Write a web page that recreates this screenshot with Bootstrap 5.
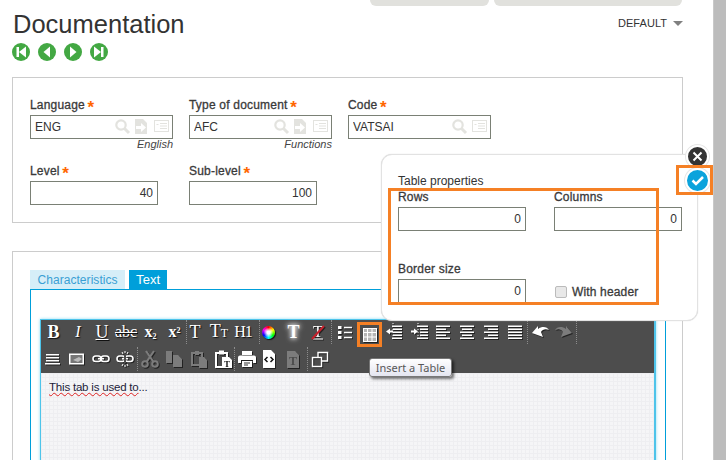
<!DOCTYPE html>
<html lang="en">
<head>
  <meta charset="UTF-8">
  <title>Documentation</title>
  <link href="https://cdn.jsdelivr.net/npm/bootstrap@5.3.3/dist/css/bootstrap.min.css" rel="stylesheet">
  <style>
    html, body { height: 460px; overflow: hidden; background: #fff; }
    body { font: 12px/14px "Liberation Sans", Arial, sans-serif; color: #333; }
    .page-wrap { height: 460px; position: relative; overflow: hidden; }
    .page-main { width: 713px; padding-left: 12px; }
    .page-bar { width: 13px; background: #bcbcbc; border-left: 1px solid #c9c9c9; }

    .top-tabs { height: 6px; padding-left: 358px; gap: 5px; }
    .top-tab { background: #e1e1dd; border-radius: 0 0 7px 7px; height: 6px; }
    .top-tab-a { width: 119px; }
    .top-tab-b { width: 188px; }

    .title-row { width: 671px; height: 31px; }
    .page-title { font: 25.5px/30px "Liberation Sans", Arial, sans-serif; color: #333; margin: 3px 0 0 1px; }
    .view-pick { margin-top: 10px; font-size: 11px; letter-spacing: .05px; }
    .view-caret { width: 0; height: 0; border: 5px solid transparent; border-top: 5px solid #808080; border-bottom: 0; margin: 0 0 0 6px; }
    .rec-nav { gap: 8px; height: 18px; margin-top: 6px; }

    .form-box { width: 671px; height: 146px; border: 1px solid #ccc; margin-top: 16px; padding: 20px 0 0 17px; }
    .fld-row { gap: 16px; height: 54px; }
    .fld-row + .fld-row { margin-top: 12px; }
    .fld-wide { width: 143px; }
    .fld-num { width: 128px; }
    .fld-num + .fld-num { margin-left: 15px; }
    .fld-label { display: block; height: 14px; margin-bottom: 3px; letter-spacing: .2px; -webkit-text-stroke: .3px #3a3a3a; color: #3a3a3a; white-space: nowrap; }
    .req { color: #f60; font-size: 17px; font-weight: bold; line-height: 0; vertical-align: -4px; margin-left: -1px; -webkit-text-stroke: 0; }
    .fld-box { border: 1px solid #7a8075; height: 24px; background: #fff; }
    .fld-box svg { flex: none; }
    input.fld-inp, input.fld-inp:focus { border: 0; border-radius: 0; box-shadow: none; padding: 0 4px; height: 22px; min-height: 0; font-size: 12px; color: #333; background: transparent; min-width: 0; flex: 1 1 0; }
    .fld-hint { font-style: italic; font-size: 11px; line-height: 11px; text-align: right; color: #444; white-space: nowrap; }

    .text-box { width: 671px; height: 300px; border: 1px solid #ccc; margin-top: 28px; padding: 18px 0 0 17px; }
    .doc-tabs { gap: 4px; height: 19px; }
    .doc-tab { display: block; padding: 0 7.500px; line-height: 20px; height: 19px; font-size: 12px; letter-spacing: .05px; background: #d6eef8; color: #3a9fd4; }
    .doc-tab.on { background: #009fda; color: #fff; padding: 0 7px; font-size: 13px; }
    .doc-pane { width: 636px; height: 300px; border: 1px solid #009fda; padding: 29px 9px 0; }
    .editor-box { border: 1px solid #4ec4ea; border-right-width: 2px; box-shadow: 0 0 3px #8fdcf4; }
    .editor-bar { background: #4d4d4d; height: 53px; }
    .bar-row { height: 24px; }
    .bar-row + .bar-row { height: 29px; padding-top: 1px; }
    .bar-btn { height: 25px; flex: none; color: #fff; position: relative; }
    .bar-btn svg { display: block; filter: drop-shadow(1px 1px 0 #222); overflow: visible; }
    .bar-sep { width: 1px; height: 24px; flex: none; border-left: 1px dotted #8c8c8c; }
    .serif-ico { font: bold 16px/16px "Liberation Serif", serif; text-shadow: 1px 1px 1px #111; white-space: nowrap; }
    .serif-ico.thin { font-weight: normal; }
    .serif-ico.big { font-size: 18px; }
    .serif-ico.tight { letter-spacing: -1px; }
    .serif-ico .low-t { font-size: 12px; }
    .serif-ico sub, .serif-ico sup { font-size: 8px; line-height: 0; }
    .glow-ico { text-shadow: 0 0 4px #fff, 0 0 6px #fff; }
    .wheel-ico { width: 13px; height: 13px; border-radius: 50%; background: radial-gradient(circle at 50% 50%, #fff 0 1.500px, transparent 5px), conic-gradient(#f00, #ff0, #0f0, #0ff, #00f, #f0f, #f00); box-shadow: 1px 1px 1px #111; }
    .mark-box { outline: 3px solid #f58025; outline-offset: -3px; margin-top: 5px; }
    .editor-text { height: 90px; padding: 7px 8px; background-color: #f5f5f7; background-image: linear-gradient(#eeeef1 1px, transparent 1px), linear-gradient(90deg, #eeeef1 1px, transparent 1px); background-size: 4px 4px; color: #1c1c3a; font-size: 11.500px; letter-spacing: -.2px; }
    .spell-err { text-decoration: underline wavy #d22; text-decoration-thickness: 1px; }

    .tip-box { position: absolute; left: 369px; top: 358px; width: 83px; height: 19px; border: 1px solid #777; border-radius: 3px; background: linear-gradient(#fff, #e4e5f0); box-shadow: 2px 2px 3px rgba(0,0,0,.55); font: 11px/17px "Noto Sans", sans-serif; color: #575757; text-align: center; white-space: nowrap; }

    .prop-pop { position: absolute; left: 381px; top: 154px; width: 317px; height: 167px; background: #fff; border: 1px solid #e2e2e2; border-radius: 11px; padding: 19px 0 0 16px; box-shadow: 0 0 1px #ccc; }
    .prop-title { height: 16px; color: #333; }
    .prop-grid { display: grid; grid-template-columns: 128px 128px; column-gap: 28px; row-gap: 31px; }
    .prop-check { height: 24px; padding-left: 1px; margin-top: 18px; letter-spacing: .15px; -webkit-text-stroke: .3px #3a3a3a; color: #3a3a3a; }
    .prop-check input.form-check-input { width: 12px; height: 12px; margin: 0 5px 0 0; background-color: #e8e8e8; border: 1px solid #bbb; border-radius: 2px; float: none; }
    .round-btn { position: absolute; border-radius: 50%; border: 2px solid #fff; box-shadow: 0 0 0 1px #e6e6e6; }
    .round-x { left: 686px; top: 145px; width: 23px; height: 23px; background: #333; }
    .round-ok { left: 685px; top: 168px; width: 25px; height: 25px; background: #0ba3dc; }
    .note-box { position: absolute; border: 3px solid #f58025; pointer-events: none; }
    .note-fields { left: 388px; top: 188px; width: 271px; height: 117px; }
    .note-ok { left: 676px; top: 165px; width: 37px; height: 30px; }
  </style>
</head>
<body>
  <div class="page-wrap d-flex">
    <div class="page-main">
      <div class="top-tabs d-flex">
        <div class="top-tab top-tab-a"></div>
        <div class="top-tab top-tab-b"></div>
      </div>

      <div class="title-row d-flex justify-content-between">
        <h1 class="page-title">Documentation</h1>
        <div class="view-pick d-flex align-items-center align-self-start">DEFAULT <span class="view-caret"></span></div>
      </div>

      <div class="rec-nav d-flex">
        <svg width="18" height="18"><circle cx="9" cy="9" r="9" fill="#43a843"/><rect x="4.500" y="4" width="2.500" height="10" fill="#fff"/><path d="M14 3.500v11L7 9z" fill="#fff"/></svg>
        <svg width="18" height="18"><circle cx="9" cy="9" r="9" fill="#43a843"/><path d="M12 3.500v11L5.500 9z" fill="#fff"/></svg>
        <svg width="18" height="18"><circle cx="9" cy="9" r="9" fill="#43a843"/><path d="M6 3.500v11L12.500 9z" fill="#fff"/></svg>
        <svg width="18" height="18"><circle cx="9" cy="9" r="9" fill="#43a843"/><rect x="11" y="4" width="2.500" height="10" fill="#fff"/><path d="M4 3.500v11L11 9z" fill="#fff"/></svg>
      </div>

      <div class="form-box">
        <div class="fld-row d-flex">
          <div class="fld-wide">
            <label class="fld-label">Language <span class="req">*</span></label>
            <div class="fld-box d-flex align-items-center">
              <input class="form-control fld-inp" value="ENG">
              <svg class="ico-find" width="20" height="16"></svg><svg class="ico-jump" width="19" height="16"></svg><svg class="ico-list" width="18" height="16"></svg>
            </div>
            <div class="fld-hint">English</div>
          </div>
          <div class="fld-wide">
            <label class="fld-label">Type of document <span class="req">*</span></label>
            <div class="fld-box d-flex align-items-center">
              <input class="form-control fld-inp" value="AFC">
              <svg class="ico-find" width="20" height="16"></svg><svg class="ico-jump" width="19" height="16"></svg><svg class="ico-list" width="18" height="16"></svg>
            </div>
            <div class="fld-hint">Functions</div>
          </div>
          <div class="fld-wide">
            <label class="fld-label">Code <span class="req">*</span></label>
            <div class="fld-box d-flex align-items-center">
              <input class="form-control fld-inp" value="VATSAI">
              <svg class="ico-find" width="20" height="16"></svg><svg class="ico-list" width="18" height="16"></svg>
            </div>
          </div>
        </div>
        <div class="fld-row d-flex">
          <div class="fld-num">
            <label class="fld-label">Level <span class="req">*</span></label>
            <div class="fld-box d-flex align-items-center"><input class="form-control fld-inp text-end" value="40"></div>
          </div>
          <div class="fld-num">
            <label class="fld-label">Sub-level <span class="req">*</span></label>
            <div class="fld-box d-flex align-items-center"><input class="form-control fld-inp text-end" value="100"></div>
          </div>
        </div>
      </div>

      <div class="text-box">
        <ul class="doc-tabs nav">
          <li><a class="doc-tab text-decoration-none" href="#">Characteristics</a></li>
          <li><a class="doc-tab on text-decoration-none" href="#">Text</a></li>
        </ul>
        <div class="doc-pane">
          <div class="editor-box">
            <div class="editor-bar">
              <div class="bar-row d-flex align-items-center" id="barOne"></div>
              <div class="bar-row d-flex align-items-center" id="barTwo"></div>
            </div>
            <div class="editor-text"><span class="spell-err">This tab is used to</span>...</div>
          </div>
        </div>
      </div>
    </div>
    <div class="page-bar"></div>

    <div class="tip-box">Insert a Table</div>

    <div class="prop-pop">
      <div class="prop-title">Table properties</div>
      <div class="prop-grid">
        <div>
          <label class="fld-label">Rows</label>
          <div class="fld-box d-flex align-items-center"><input class="form-control fld-inp text-end" value="0"></div>
        </div>
        <div>
          <label class="fld-label">Columns</label>
          <div class="fld-box d-flex align-items-center"><input class="form-control fld-inp text-end" value="0"></div>
        </div>
        <div>
          <label class="fld-label">Border size</label>
          <div class="fld-box d-flex align-items-center"><input class="form-control fld-inp text-end" value="0"></div>
        </div>
        <div class="prop-check d-flex align-items-center">
          <input class="form-check-input" type="checkbox"> With header
        </div>
      </div>
    </div>

    <div class="round-btn round-x d-flex align-items-center justify-content-center">
      <svg width="11" height="11"><path d="M1.500 1.500l8 8M9.500 1.500l-8 8" stroke="#fff" stroke-width="2"/></svg>
    </div>
    <div class="round-btn round-ok d-flex align-items-center justify-content-center">
      <svg width="13" height="11"><path d="M1.500 5.500l3.500 3.500 7-7" fill="none" stroke="#fff" stroke-width="2.500"/></svg>
    </div>
    <div class="note-box note-fields"></div>
    <div class="note-box note-ok"></div>
  </div>

  <script src="https://cdn.jsdelivr.net/npm/bootstrap@5.3.3/dist/js/bootstrap.bundle.min.js"></script>
  <script>
    // small field icons
    document.querySelectorAll('.ico-find').forEach(el => {
      el.innerHTML = '<circle cx="6" cy="6" r="4.700" fill="none" stroke="#e3e3df" stroke-width="2.200"/><path d="M9.500 9.500l4.500 4.500" stroke="#e3e3df" stroke-width="3"/>';
    });
    document.querySelectorAll('.ico-jump').forEach(el => {
      el.innerHTML = '<path d="M0 0h8l4 4v11H0z" fill="#e3e3df"/><path d="M1 7h5V4l5 4.500-5 4.500v-3H1z" fill="#fff"/>';
    });
    document.querySelectorAll('.ico-list').forEach(el => {
      el.innerHTML = '<rect x=".5" y="1.500" width="14" height="11" fill="none" stroke="#e3e3df"/><path d="M6 4.500h7M6 7h7M6 9.500h7M2.500 5.500h2" stroke="#e3e3df"/>';
    });

    function svg(body) { return `<svg width="20" height="20">${body}</svg>`; }

    // rows of text lines: [x, width] from top to bottom
    function lines(rows, y0 = 3.500, fill = '#fff') {
      return rows.map((r, i) => `<rect x="${r[0]}" y="${y0 + i * 3}" width="${r[1]}" height="1.500" fill="${fill}"/>`).join('');
    }
    function serif(text, cls = '') { return `<span class="serif-ico ${cls}">${text}</span>`; }

    const grey = '#7c7c7c';
    const chain = (c) => `<rect x="2" y="7" width="8" height="5.500" rx="2.700" fill="none" stroke="${c}" stroke-width="1.600"/><rect x="10" y="7" width="8" height="5.500" rx="2.700" fill="none" stroke="${c}" stroke-width="1.600"/><path d="M7 9.700h6" stroke="${c}" stroke-width="1.600"/>`;

    const rowOne = [
      { w: 25, html: serif('B', 'big') },
      { w: 24, html: serif('I', 'thin fst-italic') },
      { w: 24, html: serif('<u>U</u>', 'thin big') },
      { w: 24, html: serif('<s>abc</s>', 'thin') },
      { w: 25, html: serif('x<sub>2</sub>') },
      { w: 23, html: serif('x<sup>2</sup>') },
      { sep: 1 },
      { w: 16, html: serif('T', 'thin big') },
      { w: 32, html: serif('T<span class="low-t">T</span>', 'thin big') },
      { w: 16, html: serif('H1', 'thin tight') },
      { w: 8, html: '' },
      { sep: 1 },
      { w: 16, html: '<div class="wheel-ico"></div>' },
      { w: 35, html: serif('T', 'glow-ico big') },
      { w: 14, html: `<svg width="20" height="20"><text x="10" y="15" text-anchor="middle" fill="#fff" font-family="Liberation Serif" font-size="16">T</text><path d="M5 17h10" stroke="#fff"/><path d="M4 17L16 4" stroke="#c8202c" stroke-width="2"/></svg>` },
      { w: 6, html: '' },
      { sep: 1 },
      { w: 25, html: svg('<rect x="3" y="4" width="3.500" height="3" fill="#fff"/><rect x="3" y="9" width="3.500" height="3" fill="#fff"/><rect x="3" y="14" width="3.500" height="3" fill="#fff"/><path d="M9 5.500h8M9 10.500h8M9 15.500h8" stroke="#fff" stroke-width="1.300"/>') },
      { w: 25, mark: true, html: svg('<rect x="3.500" y="3.500" width="13" height="13" fill="#b5b5b5" stroke="#fff"/><path d="M7.500 3.500v13M12 3.500v13M3.500 7.500h13M3.500 12h13" stroke="#fff"/>') },
      { w: 26, html: svg(lines([[7, 10], [8, 9], [8, 9], [8, 9], [7, 10]]) + '<path d="M1 9.500l4-3v2h3v2H5v2z" fill="#fff"/><path d="M8 1v18" stroke="#fff" stroke-dasharray="1 2"/>') },
      { w: 23, html: svg(lines([[7, 11], [10, 8], [10, 8], [10, 8], [7, 11]]) + '<path d="M8 9.500l-4-3v2H1v2h3v2z" fill="#fff"/><path d="M8 1v18" stroke="#fff" stroke-dasharray="1 2"/>') },
      { w: 24, html: svg(lines([[3, 14], [3, 10], [3, 14], [3, 10], [3, 14]])) },
      { w: 24, html: svg(lines([[3, 14], [5, 10], [3, 14], [5, 10], [3, 14]])) },
      { w: 24, html: svg(lines([[3, 14], [7, 10], [3, 14], [7, 10], [3, 14]])) },
      { w: 24, html: svg(lines([[3, 14], [3, 14], [3, 14], [3, 14], [3, 14]])) },
      { sep: 1 },
      { w: 24, html: svg('<path d="M2 11l6-7v3C12 4 17 4.500 19 8c-3-1.500-6.500-1-8 2l2 5z" fill="#fff"/>') },
      { w: 24, html: svg(`<path d="M18 11l-6-7v3C8 4 3 4.500 1 8c3-1.500 6.500-1 8 2l-2 5z" fill="${grey}"/>`) },
      { sep: 1 }
    ];

    const rowTwo = [
      { w: 24, html: svg(lines([[3, 13], [3, 13], [3, 13], [2, 15]], 5)) },
      { w: 24, html: svg('<rect x="2" y="4.500" width="15" height="11" fill="#fff"/><rect x="3.500" y="6" width="12" height="8" fill="#777"/><path d="M6 11l6-3 3 2-4 3z" fill="#bbb"/>') },
      { w: 23, html: svg(chain('#fff')) },
      { w: 25, html: svg(chain('#fff') + '<rect x="9" y="6" width="2" height="8" fill="#4d4d4d"/><path d="M7 3l1 2M13 3l-1 2M7 17l1-2M13 17l-1-2M10 2v2M10 16v2" stroke="#fff"/>') },
      { sep: 1 },
      { w: 24, html: svg(`<circle cx="5" cy="15" r="2.800" fill="none" stroke="${grey}" stroke-width="2"/><circle cx="15" cy="15" r="2.800" fill="none" stroke="${grey}" stroke-width="2"/><path d="M6.500 13L14 2M13.500 13L6 2" stroke="${grey}" stroke-width="2.200"/>`) },
      { w: 24, html: svg(`<path d="M2 2h6v12H2z" fill="${grey}"/><path d="M9 6h5l4 4v8H9z" fill="${grey}"/>`) },
      { w: 25, html: svg(`<path d="M3 4h10v12H3z" fill="none" stroke="${grey}" stroke-width="2"/><rect x="6" y="2" width="4" height="4" fill="${grey}"/><path d="M10 8h5l3 3v8h-8z" fill="${grey}"/>`) },
      { w: 23, html: svg('<path d="M3 4h11v14H3z" fill="none" stroke="#fff" stroke-width="2"/><rect x="6" y="1.500" width="5" height="4" fill="#fff"/><path d="M9 8h7l3 3v8H9z" fill="#fff"/><text x="14" y="17.500" text-anchor="middle" font-family="Liberation Serif" font-weight="bold" font-size="9" fill="#111">T</text>') },
      { sep: 1 },
      { w: 24, html: svg('<rect x="5" y="2" width="10" height="4" fill="#fff"/><path d="M3 6.500h14a2 2 0 0 1 2 2V14h-3v-3H4v3H1V8.500a2 2 0 0 1 2-2z" fill="#fff"/><rect x="5" y="12" width="10" height="6" fill="#fff"/><path d="M7 14h6M7 16h4" stroke="#333"/>') },
      { w: 20, html: svg('<path d="M4 1h8l4 4v14H4z" fill="#fff"/><path d="M8.500 8l-2.500 2.500 2.500 2.500M11.500 8l2.500 2.500-2.500 2.500" fill="none" stroke="#111" stroke-width="1.500"/>') },
      { w: 28, html: svg(`<path d="M4 2h8l4 4v13H4z" fill="${grey}"/><text x="10" y="15.500" text-anchor="middle" font-family="Liberation Serif" font-weight="bold" font-size="12" fill="#4d4d4d">T</text>`) },
      { sep: 1 },
      { w: 24, html: svg('<rect x="2.500" y="8.500" width="9" height="9" fill="none" stroke="#fff" stroke-width="1.400"/><path d="M8 8V3.500h9.500V12H12" fill="none" stroke="#fff" stroke-width="1.400"/>') }
    ];

    function fillBar(id, items) {
      const bar = document.getElementById(id);
      items.forEach(item => {
        const el = document.createElement('div');
        if (item.sep) {
          el.className = 'bar-sep';
        } else {
          el.className = 'bar-btn d-flex align-items-center justify-content-center' + (item.mark ? ' mark-box' : '');
          el.style.width = item.w + 'px';
          el.innerHTML = item.html;
        }
        bar.appendChild(el);
      });
    }
    fillBar('barOne', rowOne);
    fillBar('barTwo', rowTwo);
  </script>
</body>
</html>
